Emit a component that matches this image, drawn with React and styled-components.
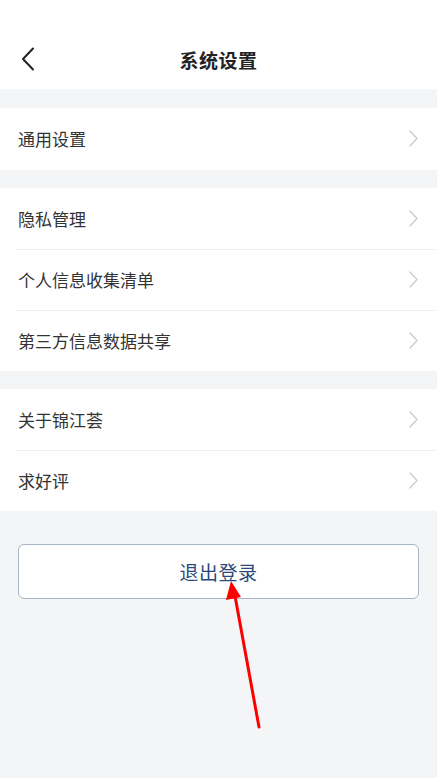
import styled, { createGlobalStyle } from 'styled-components';

const GlobalStyle = createGlobalStyle`
  html, body {
    margin: 0;
    padding: 0;
    background: #f4f5f7;
  }
  body {
    font-family: "Noto Sans CJK SC", "Noto Sans", sans-serif;
  }
`;

const Page = styled.div`
  position: relative;
  min-height: 778px;
  background: #f4f5f7;
`;

const Header = styled.header`
  display: flex;
  align-items: flex-end;
  height: 89px;
  background: #fff;
`;

const NavBar = styled.div`
  position: relative;
  display: flex;
  align-items: center;
  justify-content: center;
  width: 100%;
  height: 56px;
  padding-bottom: 4px;
  box-sizing: border-box;
`;

const BackButton = styled.button`
  position: absolute;
  left: 14px;
  top: 26px;
  transform: translateY(-50%);
  display: flex;
  align-items: center;
  justify-content: center;
  width: 28px;
  height: 32px;
  padding: 0;
  border: none;
  background: none;
`;

const Title = styled.h1`
  margin: 0;
  font-size: 19px;
  font-weight: 700;
  color: #222;
  letter-spacing: 0.5px;
`;

const Group = styled.section`
  margin-top: ${(p) => p.$gap}px;
  background: #fff;
`;

const Row = styled.div`
  display: flex;
  align-items: center;
  justify-content: space-between;
  height: ${(p) => p.$height || 61}px;
  padding: 0 19px 1px 18px;
  box-sizing: border-box;
  position: relative;

  & + &::before {
    content: '';
    position: absolute;
    top: 0;
    left: 16px;
    right: 0;
    height: 1px;
    background: #f0f0f2;
  }
`;

const Label = styled.span`
  font-size: 17px;
  color: #333;
`;

const LogoutButton = styled.button`
  display: block;
  box-sizing: border-box;
  width: calc(100% - 36px);
  height: 55px;
  margin: 33px 18px 0;
  border: 1px solid #a9b4c6;
  border-radius: 6px;
  background: #fff;
  color: #2b4a7c;
  font-family: "Noto Sans CJK SC", sans-serif;
  font-size: 19px;
  letter-spacing: 0.5px;
`;

const Annotation = styled.svg`
  position: absolute;
  left: 0;
  top: 0;
  pointer-events: none;
`;

const Chevron = ({ color = '#cacaca' }) => (
  <svg width="9" height="17" viewBox="0 0 9 17" fill="none">
    <path d="M1 1l7 7.5L1 16" stroke={color} strokeWidth="1.3" strokeLinecap="round" strokeLinejoin="round" />
  </svg>
);

const groups = [
  { gap: 19, items: ['通用设置'], height: 62 },
  { gap: 18, items: ['隐私管理', '个人信息收集清单', '第三方信息数据共享'] },
  { gap: 18, items: ['关于锦江荟', '求好评'] },
];

const App = () => (
  <Page>
    <GlobalStyle />
    <Header>
      <NavBar>
        <BackButton aria-label="返回">
          <svg width="14" height="24" viewBox="0 0 14 24" fill="none">
            <path d="M12 1.5L2 12l10 10.5" stroke="#222" strokeWidth="2" strokeLinecap="round" strokeLinejoin="round" />
          </svg>
        </BackButton>
        <Title>系统设置</Title>
      </NavBar>
    </Header>

    {groups.map((g, i) => (
      <Group key={i} $gap={g.gap}>
        {g.items.map((item) => (
          <Row key={item} $height={g.height}>
            <Label>{item}</Label>
            <Chevron />
          </Row>
        ))}
      </Group>
    ))}

    <LogoutButton>退出登录</LogoutButton>

    <Annotation width="437" height="778" viewBox="0 0 437 778">
      <line x1="259" y1="727" x2="235" y2="596" stroke="#f00" strokeWidth="3" strokeLinecap="round" />
      <polygon points="231,581 226,600 241,597" fill="#f00" />
    </Annotation>
  </Page>
);

export default App;
